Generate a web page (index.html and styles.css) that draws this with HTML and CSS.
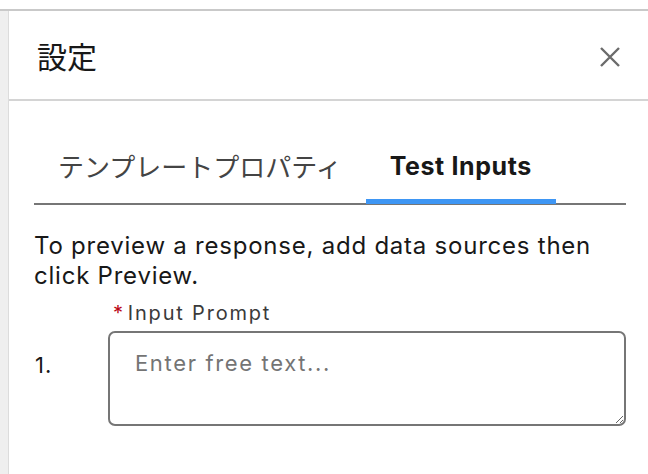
FILE: index.html
```html
<!DOCTYPE html>
<html><head>
<meta charset="utf-8">
<title>設定</title>
<link rel="stylesheet" href="styles.css">
</head>
<body>
  <div class="frame">
    <div class="gutter"></div>
    <div class="panel">
      <div class="panel-header">
        <h2 class="panel-title">設定</h2>
        <button class="close" title="閉じる">
          <svg width="22" height="22" viewBox="0 0 22 22"><path d="M2 2L20 20M20 2L2 20" stroke="#6b6b6b" stroke-width="2.4" fill="none"/></svg>
        </button>
      </div>
      <div class="panel-body">
        <div class="tabs">
          <div class="tab">テンプレートプロパティ</div>
          <div class="tab active">Test Inputs</div>
        </div>
        <p class="hint">To preview a response, add data sources then click Preview.</p>
        <div class="inputs">
          <label class="field-label" for="prompt1"><span class="required">*</span>Input Prompt</label>
          <span class="num">1.</span>
          <textarea id="prompt1" class="prompt" placeholder="Enter free text..."></textarea>
        </div>
      </div>
    </div>
  </div>
</body></html>
```

FILE: styles.css
```css
body {
  margin: 0;
  padding: 9px 0 0 0;
  font-family: Inter, "Noto Sans CJK JP", sans-serif;
  color: #181818;
  background: #fff;
}
.frame {
  display: flex;
  border-top: 2px solid #c9c9c9;
  min-height: 463px;
}
.gutter {
  width: 8px;
  background: #efefef;
  border-right: 1px solid #dcdcdc;
}
.panel {
  flex: 1;
}
.panel-header {
  display: flex;
  align-items: center;
  justify-content: space-between;
  height: 88px;
  padding: 0 27px 0 28px;
  border-bottom: 2px solid #d4d4d4;
}
.panel-title {
  margin: 0;
  font-family: "Noto Sans CJK JP", sans-serif;
  font-weight: 400;
  font-size: 30px;
  color: #181818;
}
.close {
  border: 0;
  background: none;
  padding: 0;
  display: flex;
  margin-top: 3px;
}
.panel-body {
  padding: 0 22px 0 25px;
}
.tabs {
  display: flex;
  margin-top: 45px;
  border-bottom: 2px solid #767676;
}
.tab {
  position: relative;
  padding: 0 24px 17px 24px;
  line-height: 40px;
  font-size: 26px;
  color: #444;
  font-family: "Noto Sans CJK JP", sans-serif;
}
.tab.active {
  font-family: Inter, sans-serif;
  font-size: 25px;
  font-weight: 700;
  letter-spacing: 0.6px;
  color: #181818;
}
.tab.active::after {
  content: "";
  position: absolute;
  left: 0;
  right: 0;
  bottom: -1px;
  height: 5px;
  background: #3e96f4;
}
.hint {
  margin: 26px 0 0 0;
  font-size: 24px;
  line-height: 30px;
  letter-spacing: 0.77px;
  color: #181818;
}
.inputs {
  display: grid;
  grid-template-columns: 74px 1fr;
  row-gap: 5px;
  margin-top: 9px;
}
.field-label {
  grid-column: 2;
  padding-left: 5px;
  font-size: 20px;
  line-height: 26px;
  letter-spacing: 1.8px;
  color: #3a3a3a;
}
.required {
  color: #ba0517;
  margin-right: 3px;
}
.num {
  padding: 20px 0 0 1px;
  font-size: 22px;
  line-height: 28px;
  letter-spacing: 1px;
}
.prompt {
  height: 95px;
  box-sizing: border-box;
  border: 2px solid #767676;
  border-radius: 7px;
  padding: 16px 25px;
  font-family: Inter, sans-serif;
  font-size: 22px;
  line-height: 28px;
  letter-spacing: 1.65px;
  color: #181818;
}
.prompt::placeholder {
  color: #747474;
}
```
